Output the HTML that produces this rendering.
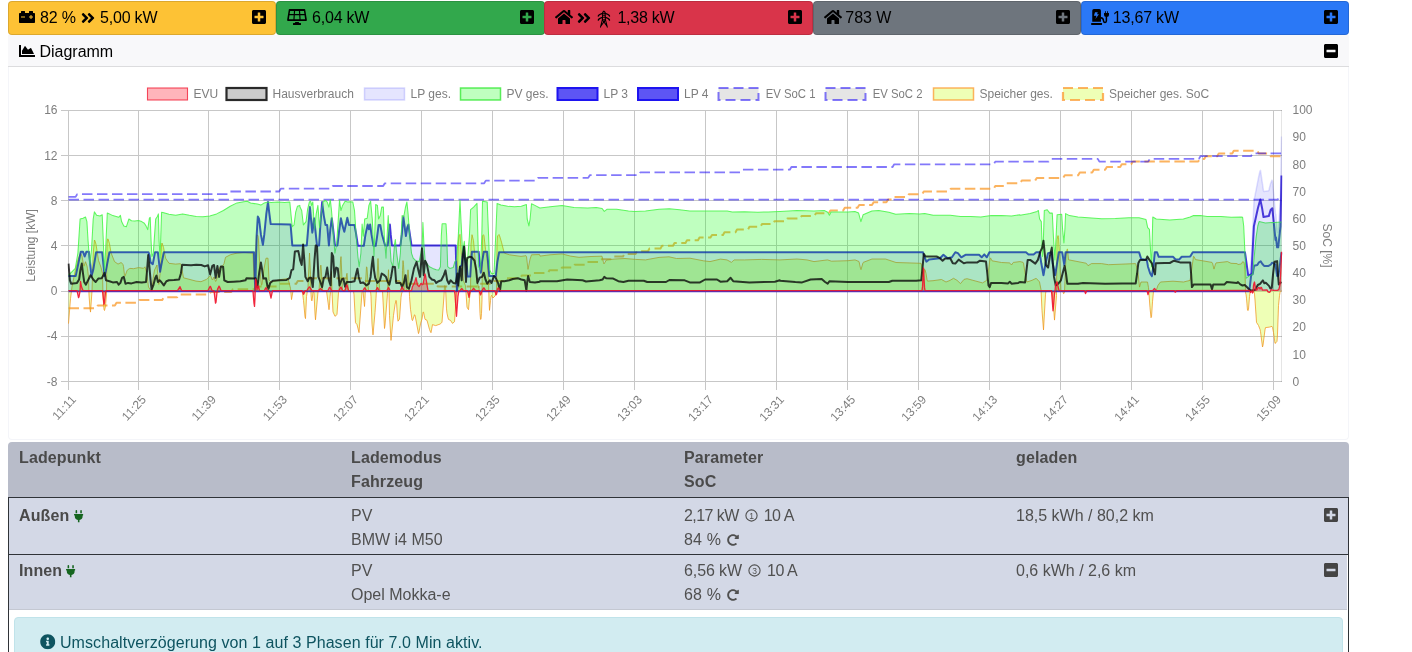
<!DOCTYPE html>
<html lang="de"><head><meta charset="utf-8"><title>openWB</title>
<style>
*{box-sizing:border-box}
html,body{margin:0;padding:0;background:#fff}
body{width:1412px;height:652px;overflow:hidden;position:relative;font-family:"Liberation Sans",Arial,sans-serif;font-size:16px;color:#000}
.abs{position:absolute}
.card{position:absolute;top:1px;height:34px;border-radius:4px;border:1px solid rgba(0,0,0,.13)}
.card .t{position:absolute;top:5.8px;font-size:16px;line-height:20px;white-space:nowrap;color:#000}
.sq{position:absolute;width:14px;height:14px;background:#000;border-radius:2px}
.sq i{position:absolute;display:block}
.sq .h{left:3px;top:6px;width:8px;height:2px}
.sq .v{left:6px;top:3px;width:2px;height:8px}
svg{position:absolute;overflow:visible}
.th{font-weight:bold;color:#4a4a4a;letter-spacing:.12px}
.td{color:#505050}
.tx{position:absolute;white-space:nowrap;line-height:20px;font-size:16px}
</style></head><body><div id="root" style="position:absolute;left:0;top:0;width:1412px;height:652px;overflow:hidden;will-change:transform">

<svg width="0" height="0" style="position:absolute"><defs>
<symbol id="i-plus" viewBox="0 0 448 512"><path d="M400 32H48C21.5 32 0 53.5 0 80v352c0 26.5 21.5 48 48 48h352c26.5 0 48-21.5 48-48V80c0-26.5-21.5-48-48-48zm-32 252c0 6.600-5.400 12-12 12h-92v92c0 6.600-5.400 12-12 12h-56c-6.600 0-12-5.400-12-12v-92H92c-6.600 0-12-5.400-12-12v-56c0-6.600 5.400-12 12-12h92v-92c0-6.600 5.400-12 12-12h56c6.600 0 12 5.400 12 12v92h92c6.600 0 12 5.400 12 12v56z"/></symbol>
<symbol id="i-minus" viewBox="0 0 448 512"><path d="M400 32H48C21.5 32 0 53.5 0 80v352c0 26.5 21.5 48 48 48h352c26.5 0 48-21.5 48-48V80c0-26.5-21.5-48-48-48zM92 296c-6.600 0-12-5.400-12-12v-56c0-6.600 5.400-12 12-12h264c6.600 0 12 5.400 12 12v56c0 6.600-5.400 12-12 12H92z"/></symbol>
<symbol id="i-bat" viewBox="0 0 512 512"><path d="M480 128h-32V80c0-8.840-7.160-16-16-16h-96c-8.840 0-16 7.160-16 16v48H192V80c0-8.840-7.160-16-16-16H80c-8.840 0-16 7.160-16 16v48H32c-17.670 0-32 14.330-32 32v256c0 17.670 14.330 32 32 32h448c17.670 0 32-14.330 32-32V160c0-17.670-14.330-32-32-32zM192 264c0 4.420-3.580 8-8 8H72c-4.420 0-8-3.580-8-8v-16c0-4.420 3.580-8 8-8h112c4.420 0 8 3.580 8 8v16zm256 0c0 4.420-3.580 8-8 8h-40v40c0 4.420-3.580 8-8 8h-16c-4.420 0-8-3.580-8-8v-40h-40c-4.420 0-8-3.580-8-8v-16c0-4.420 3.580-8 8-8h40v-40c0-4.420 3.580-8 8-8h16c4.420 0 8 3.580 8 8v40h40c4.420 0 8 3.580 8 8v16z"/></symbol>
<symbol id="i-home" viewBox="0 0 576 512"><path d="M280.370 148.260L96 300.110V464a16 16 0 0 0 16 16l112.060-.290a16 16 0 0 0 15.920-16V368a16 16 0 0 1 16-16h64a16 16 0 0 1 16 16v95.640a16 16 0 0 0 16 16.050L464 480a16 16 0 0 0 16-16V300L295.670 148.260a12.190 12.190 0 0 0-15.300 0zM571.600 251.470L488 182.560V44.050a12 12 0 0 0-12-12h-56a12 12 0 0 0-12 12v72.610L318.470 43a48 48 0 0 0-61 0L4.340 251.470a12 12 0 0 0-1.600 16.900l25.500 31A12 12 0 0 0 45.150 301l235.220-193.740a12.190 12.190 0 0 1 15.300 0L530.900 301a12 12 0 0 0 16.900-1.600l25.500-31a12 12 0 0 0-1.700-16.930z"/></symbol>
<symbol id="i-dbl" viewBox="0 0 448 512"><path d="M224.300 273l-136 136c-9.400 9.400-24.600 9.400-33.900 0l-22.600-22.600c-9.400-9.400-9.400-24.600 0-33.900l96.400-96.400-96.400-96.400c-9.400-9.400-9.400-24.600 0-33.900L54.300 103c9.400-9.400 24.600-9.400 33.900 0l136 136c9.500 9.400 9.500 24.600.1 34zm192-34l-136-136c-9.400-9.400-24.600-9.400-33.900 0l-22.600 22.600c-9.400 9.400-9.400 24.600 0 33.900l96.400 96.400-96.400 96.400c-9.400 9.400-9.400 24.600 0 33.900l22.600 22.600c9.400 9.400 24.600 9.400 33.900 0l136-136c9.400-9.200 9.400-24.400 0-33.800z"/></symbol>
<symbol id="i-area" viewBox="0 0 512 512"><path d="M500 384c6.600 0 12 5.400 12 12v40c0 6.600-5.400 12-12 12H12c-6.600 0-12-5.400-12-12V76c0-6.600 5.400-12 12-12h40c6.600 0 12 5.400 12 12v308h436zM372.700 159.500L288 216l-85.300-113.700c-5.100-6.800-15.500-6.300-19.900 1L96 248v104h384l-89.900-187.800c-3.200-6.500-11.400-8.700-17.400-4.700z"/></symbol>
<symbol id="i-plug" viewBox="0 0 384 512"><path d="M320 32a32 32 0 0 0-64 0v96h64zm48 128H16A16 16 0 0 0 0 176v32a16 16 0 0 0 16 16h16v32a160.070 160.070 0 0 0 128 156.800V512h64v-99.200A160.070 160.070 0 0 0 352 256v-32h16a16 16 0 0 0 16-16v-32a16 16 0 0 0-16-16zM128 32a32 32 0 0 0-64 0v96h64z"/></symbol>
<symbol id="i-info" viewBox="0 0 512 512"><path d="M256 8C119.043 8 8 119.083 8 256c0 136.997 111.043 248 248 248s248-111.003 248-248C504 119.083 392.957 8 256 8zm0 110c23.196 0 42 18.804 42 42s-18.804 42-42 42-42-18.804-42-42 18.804-42 42-42zm56 254c0 6.627-5.373 12-12 12h-88c-6.627 0-12-5.373-12-12v-24c0-6.627 5.373-12 12-12h12v-64h-12c-6.627 0-12-5.373-12-12v-24c0-6.627 5.373-12 12-12h64c6.627 0 12 5.373 12 12v100h12c6.627 0 12 5.373 12 12v24z"/></symbol>
<symbol id="i-redo" viewBox="0 0 512 512"><path d="M256.455 8c66.269.119 126.437 26.233 170.859 68.685l35.715-35.715C478.149 25.851 504 36.559 504 57.941V192c0 13.255-10.745 24-24 24H345.941c-21.382 0-32.090-25.851-16.971-40.971l41.750-41.750c-30.864-28.899-70.801-44.907-113.230-45.273-92.398-.798-170.283 73.977-169.484 169.442C88.764 348.009 162.184 424 256 424c41.127 0 79.997-14.678 110.629-41.556 4.743-4.161 11.906-3.908 16.368.553l39.662 39.662c4.872 4.872 4.631 12.815-.482 17.433C378.202 479.813 319.926 504 256 504 119.034 504 8.001 392.967 8 256.002 7.999 119.193 119.646 7.755 256.455 8z"/></symbol>
</defs></svg>
<!-- top cards -->
<div class="card" style="left:8px;width:268.4px;background:#fdc235">
<svg style="left:10px;top:7px" width="16" height="16"><use href="#i-bat"/></svg>
<span class="t" style="left:31px;letter-spacing:-.2px">82 %</span>
<svg style="left:72.3px;top:7.5px" width="14" height="16"><use href="#i-dbl"/></svg>
<span class="t" style="left:91px;letter-spacing:-.2px">5,00 kW</span>
<svg style="left:242.7px;top:6.5px" width="14" height="16" fill="#000"><use href="#i-plus"/></svg></div>
<div class="card" style="left:276.2px;width:268.4px;background:#32a84c">
<svg style="left:9.8px;top:7px" width="20" height="17" viewBox="0 0 20 17"><path fill-rule="evenodd" d="M2.500 0h15a.7.7 0 0 1 .7.6l1.700 10.500a.7.7 0 0 1-.7.800H.8a.7.700 0 0 1-.7-.8L1.800.6a.7.700 0 0 1 .7-.6zM3.100 2.100l-.45 3h4.100l.2-3zM8.100 2.100l-.2 3h4.200l-.2-3zM13.100 2.100l.2 3h4.100l-.45-3zM2.450 6.300l-.55 3.900h4.500l.25-3.900zM7.800 6.300l-.25 3.900h4.900l-.25-3.900zM13.350 6.300l.25 3.900h4.500l-.55-3.900zM8.400 13h3.200l.6 1h1.300a.5.500 0 0 1 .5.500v.9a.5.500 0 0 1-.5.500h-7a.5.500 0 0 1-.5-.5v-.9a.5.500 0 0 1 .5-.5h1.300z"/></svg>
<span class="t" style="left:34.8px;letter-spacing:-.2px">6,04 kW</span>
<svg style="left:242.7px;top:6.5px" width="14" height="16"><use href="#i-plus"/></svg></div>
<div class="card" style="left:544.4px;width:268.4px;background:#d9344a">
<svg style="left:10px;top:7px" width="18" height="16"><use href="#i-home"/></svg>
<svg style="left:31.3px;top:7.5px" width="14" height="16"><use href="#i-dbl"/></svg>
<svg style="left:51.600px;top:8px" width="14" height="18" viewBox="0 0 14 18" fill="none" stroke="#000" stroke-linecap="round" stroke-linejoin="round"><path stroke-width="1.050" d="M6.900 1.100L5.800 2.200 5.400 9.700 3.500 17.100M6.900 1.100L8 2.200 8.400 9.700 10.300 17.100M5.400 9.700L10 16.300M8.400 9.700L3.800 16.300"/><path stroke-width="1.350" d="M1.300 6Q1.600 4.400 5.600 3.300M12.500 6Q12.200 4.400 8.200 3.300M1.300 10.100Q1.600 8.400 5.400 7.300M12.500 10.100Q12.200 8.400 8.400 7.300"/><path stroke-width=".85" d="M5.800 3.300H8M5.600 5.300H8.200M5.500 7.300H8.300M5.400 9.700H8.400"/></svg>
<span class="t" style="left:72px;letter-spacing:-.25px">1,38 kW</span>
<svg style="left:242.7px;top:6.5px" width="14" height="16"><use href="#i-plus"/></svg></div>
<div class="card" style="left:812.6px;width:268.4px;background:#6e757d">
<svg style="left:10px;top:7px" width="18" height="16"><use href="#i-home"/></svg>
<span class="t" style="left:31.7px;letter-spacing:-.05px">783 W</span>
<svg style="left:242.7px;top:6.5px" width="14" height="16"><use href="#i-plus"/></svg></div>
<div class="card" style="left:1080.8px;width:268.2px;background:#2a78f6">
<svg style="left:9.200px;top:7px" width="19" height="17" viewBox="0 0 19 17"><path fill-rule="evenodd" d="M2.900 0h5.400a1.650 1.650 0 0 1 1.650 1.650V12.700H1.250V1.650A1.650 1.650 0 0 1 2.900 0zM4 3.350h2.800l-.8 1.850h1.900L4.400 10l1.100-3.150H2.900zM.5 14h10.200a.35.350 0 0 1 .35.350v1.200a.35.350 0 0 1-.35.350H.5a.35.350 0 0 1-.35-.35v-1.200A.35.350 0 0 1 .5 14zM13.950 2.400a.45.450 0 0 1 .9 0v1.500h1.300v-1.500a.45.450 0 0 1 .9 0v1.500h.65a.3.300 0 0 1 .3.300v1.300a2.500 2.500 0 0 1-5 0v-1.300a.3.300 0 0 1 .3-.3h.65z"/><path d="M9.900 8.700c2.400.2 2.500 1.600 2.700 3.400s2.800 1.800 2.800-.3V7.500" fill="none" stroke="#000" stroke-width="1.500"/></svg>
<span class="t" style="left:31px;letter-spacing:-.2px">13,67 kW</span>
<svg style="left:242.7px;top:6.5px" width="14" height="16"><use href="#i-plus"/></svg></div>

<!-- chart card -->
<div class="abs" id="chartcard" style="left:8px;top:35px;width:1341px;height:405px;border:1px solid #f4f5f9;border-top:none;border-radius:0 0 4px 4px;background:#fff"></div>
<div class="abs" style="left:8px;top:35px;width:1341px;height:32px;background:#f8f8fa;border-bottom:1px solid #dcdcde"></div>
<svg style="left:18.500px;top:43.200px" width="16" height="16"><use href="#i-area"/></svg>
<span class="tx" style="left:39.400px;top:42px">Diagramm</span>
<svg style="left:1324px;top:43px" width="14" height="16"><use href="#i-minus"/></svg>

<!-- CHART -->
<!--CS-->
<svg id="chart" width="1412" height="652" viewBox="0 0 1412 652" style="left:0;top:0" font-family="Liberation Sans, Arial, sans-serif" font-size="12" fill="#7e7e7e">
<path d="M68.5 110 V390 M138.5 110 V390 M208.4 110 V390 M279.5 110 V390 M350.5 110 V390 M421.4 110 V390 M492.3 110 V390 M563.3 110 V390 M634.4 110 V390 M705.5 110 V390 M776.6 110 V390 M847.7 110 V390 M918.7 110 V390 M989.7 110 V390 M1060.5 110 V390 M1131.6 110 V390 M1202.5 110 V390 M1273.6 110 V390 M60.5 110 H1281.5 M60.5 155.3 H1281.5 M60.5 200.5 H1281.5 M60.5 245.7 H1281.5 M60.5 291 H1281.5 M60.5 336.2 H1281.5 M60.5 381.5 H1281.5" stroke="#000" stroke-opacity=".22" stroke-width="1" fill="none" shape-rendering="crispEdges"/>
<path d="M1281.5 110 V381.5" stroke="#000" stroke-opacity=".1" stroke-width="1" fill="none" shape-rendering="crispEdges"/>
<clipPath id="cp"><rect x="67.5" y="110" width="1215" height="271.5"/></clipPath>
<g clip-path="url(#cp)" fill="none" stroke-linejoin="round" stroke-linecap="butt">
<path d="M68.5 308.2 L96.2 308.2 L97.8 305.5 L114.9 305.5 L116.5 302.8 L137.8 302.8 L139.4 300.1 L162.2 300.1 L163.8 297.3 L177.2 297.3 L178.8 294.6 L209.2 294.6 L210.8 291.9 L231.2 291.9 L232.8 289.2 L254.2 289.2 L255.8 286.5 L277.2 286.5 L278.8 283.8 L296.2 283.8 L297.8 281 L306.2 281 L307.8 278.3 L364.2 278.3 L365.8 281 L399.2 281 L400.8 283.8 L436.2 283.8 L437.8 286.5 L477.2 286.5 L478.8 283.8 L491.2 283.8 L492.8 281 L504.2 281 L505.8 278.3 L520.2 278.3 L521.8 275.6 L532.2 275.6 L533.8 272.9 L548 272.9 L549.5 270.2 L560.5 270.2 L562 267.5 L573 267.5 L574.5 264.8 L585.5 264.8 L587 262 L598 262 L599.5 259.3 L610.5 259.3 L612 256.6 L623 256.6 L624.5 253.9 L635.5 253.9 L637 251.2 L648 251.2 L649.5 248.5 L660.5 248.5 L662 245.8 L673 245.8 L674.5 243 L685.5 243 L687 240.3 L698 240.3 L699.5 237.6 L710.5 237.6 L712 234.9 L723 234.9 L724.5 232.2 L735.5 232.2 L737 229.5 L748 229.5 L749.5 226.7 L760.5 226.7 L762 224 L773 224 L774.5 221.3 L785.6 221.3 L787.2 218.6 L800 218.6 L801.6 215.9 L814.4 215.9 L816 213.2 L828.8 213.2 L830.4 210.5 L843.2 210.5 L844.8 207.7 L857.6 207.7 L859.2 205 L872 205 L873.6 202.3 L886.4 202.3 L888 199.6 L892.6 199.6 L894.2 196.9 L907.2 196.9 L908.8 194.2 L922.2 194.2 L923.8 191.5 L949.2 191.5 L950.8 188.7 L993.7 188.7 L995.3 186 L1004.2 186 L1005.8 183.3 L1020.2 183.3 L1021.8 180.6 L1035.2 180.6 L1036.8 177.9 L1063.2 177.9 L1064.8 175.2 L1078.2 175.2 L1079.8 172.4 L1092.2 172.4 L1093.8 169.7 L1105.2 169.7 L1106.8 167 L1120.2 167 L1121.8 164.3 L1131.2 164.3 L1132.8 161.6 L1198.2 161.6 L1199.8 158.9 L1204.2 158.9 L1205.8 156.2 L1217.2 156.2 L1218.8 153.4 L1232.2 153.4 L1233.8 150.7 L1257.2 150.7 L1258.8 153.4 L1269.2 153.4 L1270.8 156.2 L1281.5 156.2" stroke="#f99a2a" stroke-opacity=".75" stroke-width="2" stroke-dasharray="10.5 4.5"/>
<path d="M68.5 323.6 L70.5 298.7 L72 286.7 L75.5 269.4 L77.5 261.4 L78 259.6 L80.5 253.2 L82 256.2 L83.5 264.7 L84 266.2 L85.5 261.7 L87 266 L87.5 268.8 L88.5 276.8 L89 295 L90 308.8 L90.5 312.1 L92 291 L93 259.2 L93.5 250 L94.5 240 L95 241 L96 244.3 L98.5 260.4 L101 267.3 L102.5 273.3 L103 297 L104 309.5 L104.5 310.5 L105.5 306.3 L106.5 294 L107 243.7 L107.5 239.2 L108 238.8 L109.5 243.7 L111 252.7 L114.5 261.6 L118 264.1 L121 262.6 L121.5 262.7 L123 264.6 L123.5 266.6 L124.5 275.3 L125 276.1 L127 270.7 L127.5 269.9 L129.5 268.6 L130 268.4 L133.5 268.7 L138.5 267.6 L143.5 268.3 L145 266.8 L146.5 272.3 L147 275 L148.5 287 L151 290.9 L151.5 291 L152 290 L153 278.9 L154.5 270 L157 265 L158.5 284.2 L159 284.4 L160.5 268.4 L161.5 244.8 L162 243 L163.5 247.3 L165.5 258 L166 258.9 L169 263.3 L175.5 264.1 L180.5 263.7 L181 264.3 L183.5 277.8 L196 281.1 L201 281.7 L206.5 279.4 L210.5 275.4 L212 279.3 L212.5 280 L214 277 L215.5 281.3 L216 281.3 L217.5 276.7 L220 266.7 L222.5 265.9 L224 263.7 L225.5 257.3 L230.5 254.7 L237 253.1 L244 252.4 L253 253.1 L254 279 L255.5 257 L256.5 236.5 L257 234.8 L258 235.8 L258.5 240.1 L260 270.1 L261.5 285.1 L262 284.7 L264 268.7 L266 258.2 L268 258.2 L269 279.9 L269.5 280.7 L271 282 L271.5 281.9 L281 279.5 L288 278.6 L290.5 288.2 L291.5 299.6 L293 291 L302 291 L302.5 292.9 L303.5 300.4 L305 316.8 L305.5 318.6 L306.5 296.6 L308 287.2 L309.5 253 L310.5 274.3 L311 294.3 L311.5 300.3 L312 300.9 L313 292.4 L313.5 291.4 L314 293.2 L315 313.9 L315.5 319.8 L318 291.9 L318.5 291 L319 291 L320.5 265.6 L321 265.1 L322.5 291 L326.5 291 L329 309.7 L329.5 305.3 L330 296.8 L330.5 292.4 L331 291.8 L331.5 271.4 L332 291.9 L333 311.9 L335 316.3 L335.5 316.1 L337 314.3 L338.5 292.4 L339 291.4 L340.5 261 L341 256.6 L342.5 289.9 L343 291 L345 291 L345.5 288.1 L346.5 274.9 L347 273.3 L348.5 291 L353.5 291 L354 294.7 L355.5 322.7 L357 324.6 L359 332.6 L362 292.5 L363 291 L364.5 306.5 L365 298.5 L365.5 283.2 L366.5 266.8 L367 267.7 L368.5 291 L370.5 291 L371 296.5 L372 324.1 L373 334.9 L375 312.5 L376 298.4 L378 258.5 L379.5 287.9 L380 291 L382.5 291 L384.5 328.5 L385 325.2 L387.5 293.6 L388 277.6 L388.5 269.7 L389.5 315.4 L391 340.4 L393.5 315.3 L395 304.7 L396 300.4 L396.5 302.1 L397.5 317.1 L398 321.2 L399.5 319.1 L401 297.5 L401.5 294 L402 292.5 L402.5 270.4 L403 260.6 L403.5 264.6 L405 291 L406.5 291 L408 269.8 L409 282 L409.5 296.5 L410.5 309.3 L412 319.8 L412.5 320.6 L414.5 314.8 L415 315.1 L418.5 333.6 L419 332 L420.5 323.8 L422 319 L423 312.6 L423.5 311.9 L425 319.3 L427 320.3 L429.5 329.5 L430.5 332 L431 332.7 L432.5 324.6 L435.5 325.6 L436 325.5 L440 324.1 L441.5 322.9 L442 322.1 L444 295.9 L444.5 285.8 L445.5 286.1 L446.5 308.9 L447 313.4 L448 317.8 L448.5 319.4 L450.5 320.4 L452.5 323.4 L454.5 321.7 L456.5 294.1 L457 274.6 L457.5 268.6 L458.5 240 L459 235.6 L460 234.4 L462 263.5 L463.5 280.6 L465.5 285.9 L467 307 L467.5 308.3 L468.5 309.7 L469.5 298.1 L470.5 291.6 L471 244.4 L472 234.7 L473.5 240.7 L477 280.1 L478.5 287.7 L479 286.3 L480 313.5 L480.5 319.3 L481 319.3 L481.5 313.3 L482 299.8 L482.5 235.7 L483.5 234.7 L484 235.9 L485.5 249.4 L487 258.5 L487.5 264.1 L488.5 280.1 L489 300.1 L489.5 310.4 L490.5 300.6 L491 296.9 L491.5 295.3 L493 298 L495 296 L496.5 292.4 L497 245 L497.5 236 L499 234.5 L499.5 235.5 L501.5 242.2 L504 252.1 L504.5 253.2 L509.5 254.8 L521 256.4 L526 255.7 L526.5 256.6 L528 269.4 L530 259.3 L531.5 254.8 L539.5 254.5 L540 256.1 L550 254.8 L562 253.9 L570.5 256.1 L579 257.3 L591 256.5 L602 256.2 L603.5 262.6 L604 263.9 L606.5 259.9 L615 259 L625 258.5 L635.5 259.4 L645.5 259.9 L659 257.4 L669 256.8 L676.5 258.5 L690 258.2 L703.5 260.8 L710 261.6 L720.5 259.1 L727 259.9 L731.5 262.4 L734 259.9 L734.5 259.9 L744.5 259.9 L761.5 259.4 L780 259.9 L797 259 L807 259.9 L814 261.6 L827.5 259.9 L831.5 261.2 L848 260.7 L855 259.9 L859 261.5 L860.5 268.4 L861 269.6 L863 262.7 L863.5 262.3 L872 259 L885.5 259 L896 262.5 L921 263.3 L921.5 265.1 L923 276.8 L924.5 269.3 L925 269.6 L926 273.4 L927 279.7 L927.5 281.1 L933 280.7 L941.5 279.5 L946 282 L950 280.4 L953.5 278.3 L957 280.3 L960.5 283.6 L964 279.4 L967 278.7 L982.5 282.9 L986.5 280.5 L987 279.2 L988.5 270.2 L990 258.9 L990.5 257.9 L992 260.8 L1001.5 262.5 L1009.5 262.9 L1010 263.2 L1011.5 265 L1013 262.7 L1013.5 262.4 L1020 261.6 L1023 262.3 L1023.5 263.1 L1025 272.8 L1026.5 280.5 L1027 282 L1032 280.3 L1036 278.4 L1036.5 278.6 L1039.5 281.9 L1041 289.6 L1042 310.6 L1043.5 329.9 L1045.5 294.2 L1046 291 L1052 291 L1053 300.1 L1054.5 320.1 L1056.5 295.7 L1057 239.6 L1058 235.6 L1058.5 237.5 L1059.5 253.4 L1061 291 L1062.5 291 L1063 291.8 L1063.5 293.6 L1064 293.5 L1064.5 291.7 L1066 256.2 L1067 249.3 L1067.5 249.1 L1068.5 259.8 L1086 263.2 L1086.5 263.5 L1088 265.7 L1091.5 263.6 L1101.5 263.6 L1108.5 264.7 L1135.5 263.6 L1136 264.6 L1138 272.4 L1139.5 287.1 L1141 282 L1147.5 282 L1148.5 287.6 L1150 307.7 L1151 317.7 L1151.5 316.8 L1152.5 301.8 L1153.5 291 L1156 291 L1158 285.3 L1160.5 282 L1173 281.2 L1183.5 282 L1190 280.4 L1190.5 278 L1193.5 256.4 L1194 256.5 L1195.5 259.6 L1212 262.4 L1212.5 263.1 L1214 269.1 L1215.5 263.9 L1216 262.9 L1227.5 261.6 L1231 263.3 L1237 263.6 L1238 264.5 L1241 264 L1241.5 263.8 L1242.5 261.8 L1244 262.2 L1244.5 265.3 L1245 271 L1245.5 292.7 L1246 294.3 L1246.5 298.2 L1247.5 310.1 L1248 310.6 L1248.5 309.1 L1249.5 296.5 L1250 292.8 L1251.5 290.9 L1253.5 290.9 L1254 291.9 L1254.5 294.1 L1255 299.9 L1256.5 322.4 L1258.5 325.5 L1260 329.3 L1260.5 331.6 L1262.5 347 L1263 345.2 L1265 329.8 L1265.5 327.6 L1269.5 327.1 L1272 326.4 L1272.5 327.3 L1273.5 332.5 L1275 343.4 L1276 342.7 L1277 341.3 L1277.5 334.1 L1278.5 305.6 L1279.5 295.6 L1280 292.6 L1280.5 291.4 L1281 290.9 L1281.5 290.9 L1281.5 291 L68.5 291 Z" fill="#c8ff0d" fill-opacity=".3" stroke="none"/>
<path d="M68.5 323.6 L70.5 298.7 L72 286.7 L75.5 269.4 L77.5 261.4 L78 259.6 L80.5 253.2 L82 256.2 L83.5 264.7 L84 266.2 L85.5 261.7 L87 266 L87.5 268.8 L88.5 276.8 L89 295 L90 308.8 L90.5 312.1 L92 291 L93 259.2 L93.5 250 L94.5 240 L95 241 L96 244.3 L98.5 260.4 L101 267.3 L102.5 273.3 L103 297 L104 309.5 L104.5 310.5 L105.5 306.3 L106.5 294 L107 243.7 L107.5 239.2 L108 238.8 L109.5 243.7 L111 252.7 L114.5 261.6 L118 264.1 L121 262.6 L121.5 262.7 L123 264.6 L123.5 266.6 L124.5 275.3 L125 276.1 L127 270.7 L127.5 269.9 L129.5 268.6 L130 268.4 L133.5 268.7 L138.5 267.6 L143.5 268.3 L145 266.8 L146.5 272.3 L147 275 L148.5 287 L151 290.9 L151.5 291 L152 290 L153 278.9 L154.5 270 L157 265 L158.5 284.2 L159 284.4 L160.5 268.4 L161.5 244.8 L162 243 L163.5 247.3 L165.5 258 L166 258.9 L169 263.3 L175.5 264.1 L180.5 263.7 L181 264.3 L183.5 277.8 L196 281.1 L201 281.7 L206.5 279.4 L210.5 275.4 L212 279.3 L212.5 280 L214 277 L215.5 281.3 L216 281.3 L217.5 276.7 L220 266.7 L222.5 265.9 L224 263.7 L225.5 257.3 L230.5 254.7 L237 253.1 L244 252.4 L253 253.1 L254 279 L255.5 257 L256.5 236.5 L257 234.8 L258 235.8 L258.5 240.1 L260 270.1 L261.5 285.1 L262 284.7 L264 268.7 L266 258.2 L268 258.2 L269 279.9 L269.5 280.7 L271 282 L271.5 281.9 L281 279.5 L288 278.6 L290.5 288.2 L291.5 299.6 L293 291 L302 291 L302.5 292.9 L303.5 300.4 L305 316.8 L305.5 318.6 L306.5 296.6 L308 287.2 L309.5 253 L310.5 274.3 L311 294.3 L311.5 300.3 L312 300.9 L313 292.4 L313.5 291.4 L314 293.2 L315 313.9 L315.5 319.8 L318 291.9 L318.5 291 L319 291 L320.5 265.6 L321 265.1 L322.5 291 L326.5 291 L329 309.7 L329.5 305.3 L330 296.8 L330.5 292.4 L331 291.8 L331.5 271.4 L332 291.9 L333 311.9 L335 316.3 L335.5 316.1 L337 314.3 L338.5 292.4 L339 291.4 L340.5 261 L341 256.6 L342.5 289.9 L343 291 L345 291 L345.5 288.1 L346.5 274.9 L347 273.3 L348.5 291 L353.5 291 L354 294.7 L355.5 322.7 L357 324.6 L359 332.6 L362 292.5 L363 291 L364.5 306.5 L365 298.5 L365.5 283.2 L366.5 266.8 L367 267.7 L368.5 291 L370.5 291 L371 296.5 L372 324.1 L373 334.9 L375 312.5 L376 298.4 L378 258.5 L379.5 287.9 L380 291 L382.5 291 L384.5 328.5 L385 325.2 L387.5 293.6 L388 277.6 L388.5 269.7 L389.5 315.4 L391 340.4 L393.5 315.3 L395 304.7 L396 300.4 L396.5 302.1 L397.5 317.1 L398 321.2 L399.5 319.1 L401 297.5 L401.5 294 L402 292.5 L402.5 270.4 L403 260.6 L403.5 264.6 L405 291 L406.5 291 L408 269.8 L409 282 L409.5 296.5 L410.5 309.3 L412 319.8 L412.5 320.6 L414.5 314.8 L415 315.1 L418.5 333.6 L419 332 L420.5 323.8 L422 319 L423 312.6 L423.5 311.9 L425 319.3 L427 320.3 L429.5 329.5 L430.5 332 L431 332.7 L432.5 324.6 L435.5 325.6 L436 325.5 L440 324.1 L441.5 322.9 L442 322.1 L444 295.9 L444.5 285.8 L445.5 286.1 L446.5 308.9 L447 313.4 L448 317.8 L448.5 319.4 L450.5 320.4 L452.5 323.4 L454.5 321.7 L456.5 294.1 L457 274.6 L457.5 268.6 L458.5 240 L459 235.6 L460 234.4 L462 263.5 L463.5 280.6 L465.5 285.9 L467 307 L467.5 308.3 L468.5 309.7 L469.5 298.1 L470.5 291.6 L471 244.4 L472 234.7 L473.5 240.7 L477 280.1 L478.5 287.7 L479 286.3 L480 313.5 L480.5 319.3 L481 319.3 L481.5 313.3 L482 299.8 L482.5 235.7 L483.5 234.7 L484 235.9 L485.5 249.4 L487 258.5 L487.5 264.1 L488.5 280.1 L489 300.1 L489.5 310.4 L490.5 300.6 L491 296.9 L491.5 295.3 L493 298 L495 296 L496.5 292.4 L497 245 L497.5 236 L499 234.5 L499.5 235.5 L501.5 242.2 L504 252.1 L504.5 253.2 L509.5 254.8 L521 256.4 L526 255.7 L526.5 256.6 L528 269.4 L530 259.3 L531.5 254.8 L539.5 254.5 L540 256.1 L550 254.8 L562 253.9 L570.5 256.1 L579 257.3 L591 256.5 L602 256.2 L603.5 262.6 L604 263.9 L606.5 259.9 L615 259 L625 258.5 L635.5 259.4 L645.5 259.9 L659 257.4 L669 256.8 L676.5 258.5 L690 258.2 L703.5 260.8 L710 261.6 L720.5 259.1 L727 259.9 L731.5 262.4 L734 259.9 L734.5 259.9 L744.5 259.9 L761.5 259.4 L780 259.9 L797 259 L807 259.9 L814 261.6 L827.5 259.9 L831.5 261.2 L848 260.7 L855 259.9 L859 261.5 L860.5 268.4 L861 269.6 L863 262.7 L863.5 262.3 L872 259 L885.5 259 L896 262.5 L921 263.3 L921.5 265.1 L923 276.8 L924.5 269.3 L925 269.6 L926 273.4 L927 279.7 L927.5 281.1 L933 280.7 L941.5 279.5 L946 282 L950 280.4 L953.5 278.3 L957 280.3 L960.5 283.6 L964 279.4 L967 278.7 L982.5 282.9 L986.5 280.5 L987 279.2 L988.5 270.2 L990 258.9 L990.5 257.9 L992 260.8 L1001.5 262.5 L1009.5 262.9 L1010 263.2 L1011.5 265 L1013 262.7 L1013.5 262.4 L1020 261.6 L1023 262.3 L1023.5 263.1 L1025 272.8 L1026.5 280.5 L1027 282 L1032 280.3 L1036 278.4 L1036.5 278.6 L1039.5 281.9 L1041 289.6 L1042 310.6 L1043.5 329.9 L1045.5 294.2 L1046 291 L1052 291 L1053 300.1 L1054.5 320.1 L1056.5 295.7 L1057 239.6 L1058 235.6 L1058.5 237.5 L1059.5 253.4 L1061 291 L1062.5 291 L1063 291.8 L1063.5 293.6 L1064 293.5 L1064.5 291.7 L1066 256.2 L1067 249.3 L1067.5 249.1 L1068.5 259.8 L1086 263.2 L1086.5 263.5 L1088 265.7 L1091.5 263.6 L1101.5 263.6 L1108.5 264.7 L1135.5 263.6 L1136 264.6 L1138 272.4 L1139.5 287.1 L1141 282 L1147.5 282 L1148.5 287.6 L1150 307.7 L1151 317.7 L1151.5 316.8 L1152.5 301.8 L1153.5 291 L1156 291 L1158 285.3 L1160.5 282 L1173 281.2 L1183.5 282 L1190 280.4 L1190.5 278 L1193.5 256.4 L1194 256.5 L1195.5 259.6 L1212 262.4 L1212.5 263.1 L1214 269.1 L1215.5 263.9 L1216 262.9 L1227.5 261.6 L1231 263.3 L1237 263.6 L1238 264.5 L1241 264 L1241.5 263.8 L1242.5 261.8 L1244 262.2 L1244.5 265.3 L1245 271 L1245.5 292.7 L1246 294.3 L1246.5 298.2 L1247.5 310.1 L1248 310.6 L1248.5 309.1 L1249.5 296.5 L1250 292.8 L1251.5 290.9 L1253.5 290.9 L1254 291.9 L1254.5 294.1 L1255 299.9 L1256.5 322.4 L1258.5 325.5 L1260 329.3 L1260.5 331.6 L1262.5 347 L1263 345.2 L1265 329.8 L1265.5 327.6 L1269.5 327.1 L1272 326.4 L1272.5 327.3 L1273.5 332.5 L1275 343.4 L1276 342.7 L1277 341.3 L1277.5 334.1 L1278.5 305.6 L1279.5 295.6 L1280 292.6 L1280.5 291.4 L1281 290.9 L1281.5 290.9" stroke="#f0961e" stroke-opacity=".75" stroke-width="1"/>
<path d="M68.5 199.6 L1277.7 199.6 L1279.3 196.9 L1281.5 196.9" stroke="#1400f5" stroke-opacity=".53" stroke-width="1.8" stroke-dasharray="10.5 4.5"/>
<path d="M68.5 196.9 L75.6 196.9 L77.2 194.2 L228.7 194.2 L230.3 191.5 L279.2 191.5 L280.8 188.7 L331.2 188.7 L332.8 186 L383.2 186 L384.8 183.3 L484.2 183.3 L485.8 180.6 L536.2 180.6 L537.8 177.9 L588.2 177.9 L589.8 175.2 L638.7 175.2 L640.3 172.4 L741.2 172.4 L742.8 169.7 L789.8 169.7 L791.4 167 L892.6 167 L894.2 164.3 L993.7 164.3 L995.3 161.6 L1048.7 161.6 L1050.3 158.9 L1097.8 158.9 L1099.4 161.6 L1148.2 161.6 L1149.8 158.9 L1198.9 158.9 L1200.5 156.2 L1251 156.2 L1252.6 153.4 L1281.5 153.4" stroke="#1400f5" stroke-opacity=".53" stroke-width="1.8" stroke-dasharray="10.5 4.5"/>
<path d="M68.5 291 L1249.3 290.9 L1251.6 271.4 L1253.9 226 L1257.9 207.9 L1260.3 199.1 L1262.1 207.9 L1263.5 216.7 L1268.8 215.8 L1270.6 209.7 L1272.3 207.9 L1275.5 239.6 L1276 237.3 L1277.1 247 L1278.2 247 L1280.5 226 L1281.5 175.3" stroke="#1700ca" stroke-opacity=".75" stroke-width="2" transform="translate(0 .3)"/>
<path d="M68.5 276.1 L75.7 276.1 L80.8 251.7 L83 251.7 L84.7 256.5 L86.4 251.7 L88.9 251.7 L91.5 276.1 L93.2 270.1 L96.1 252.2 L102.2 252.2 L104.6 276.1 L106 270.1 L109.4 252.2 L148.5 252.2 L149.4 254.8 L150.6 262.4 L152.8 264.1 L155 252.2 L157.9 252.2 L160.1 271.8 L161.3 265 L163.8 252.2 L254 252.2 L255.2 290.5 L256.6 236.1 L257.8 216.5 L259.1 219 L260.9 234.4 L262.9 244.9 L264.3 234.4 L266.3 213.9 L268 202 L269.4 213.9 L270.7 224.1 L290.6 224.5 L292.3 245.4 L306.8 245.4 L309.9 207.1 L312.3 232.7 L313.3 225.9 L314 218.2 L315.3 229.3 L317 245.4 L319.1 245.4 L320.4 224.1 L322.1 202 L323.8 215.6 L325.5 225 L327.2 225 L328.9 245.4 L330.3 229.3 L331.8 218.2 L333.2 229.3 L334.9 245.4 L337.4 245.4 L339.1 231 L340.9 218.2 L342.6 225.9 L344.3 231.8 L347.3 217.7 L349 225 L354.5 225 L356.2 234.4 L357.9 245.8 L363.8 245.8 L365.5 234.4 L367.7 224.5 L368.9 229.3 L370.1 224.5 L371.5 234.4 L373.5 245.8 L375.7 245.8 L377.4 234.4 L378.6 225 L380.3 225 L382 234.4 L385.1 245.4 L387.7 245.4 L389.9 224.5 L390.7 234.4 L391.9 245.4 L400.4 245.4 L401.8 234.4 L403.3 216.5 L405.9 236.1 L407.2 227.6 L408.4 224.5 L411.5 245.4 L455.7 245.4 L456.9 290.5 L460 266.7 L461.7 265 L463.4 246.3 L464.8 258.2 L466.8 266.7 L467.7 276.6 L470.2 276.6 L471.1 261.6 L471.9 251.7 L478.7 251.7 L479.6 261.6 L480.8 272.7 L482.1 261.6 L483.8 251.7 L487.2 251.7 L489.3 276.1 L495.7 276.1 L497.4 261.6 L499.1 252.2 L923 252.2 L924.3 256.5 L926.4 261.6 L928.9 259.6 L940 258.2 L943.4 254.8 L947.7 258.2 L951.9 257.3 L955.3 252.2 L957.9 253.1 L961.3 257.3 L965.5 254.8 L979.1 254.8 L981.7 257.3 L984.3 254.4 L986.8 257.3 L989.4 252.2 L1026 252.2 L1028.5 254.4 L1033.6 254.4 L1036.2 252.2 L1039.6 252.2 L1041.3 263.3 L1043.5 275.2 L1045.5 263.3 L1048.1 253.1 L1051.5 252.2 L1052.7 263.3 L1055.2 275.2 L1058.8 252.2 L1062.2 252.2 L1064.3 265 L1065.6 252.2 L1139.1 252.2 L1141.2 259 L1146.8 259.9 L1148 266.7 L1150.2 273.5 L1151.9 276.1 L1153.6 265 L1154.8 252.2 L1157 252.2 L1158.7 256.8 L1173.2 256.8 L1175.7 259.6 L1179.1 259.6 L1181.7 256.8 L1190.2 256.5 L1192.8 252.2 L1245 252.3 L1248.2 275.3 L1252.7 274.2 L1254.1 265.7 L1257.3 265.1 L1259 262.3 L1260.7 261.4 L1262.4 264 L1264.1 265.9 L1268.6 265.9 L1270.9 264.5 L1272 262.8 L1273.7 263.4 L1275.4 264.5 L1277.1 275.9 L1278.2 275.9 L1279.4 269.1 L1281.5 252.3" stroke="#1700ca" stroke-opacity=".75" stroke-width="2"/>
<path d="M68.5 275.2 L71.9 271.8 L75.3 268.4 L77.9 253.1 L80.1 219 L83 218.2 L85.5 217 L86.9 221.6 L88.1 241.2 L89.8 264.1 L91.5 249.7 L93.2 219 L94.4 211.9 L96.6 215.3 L100 216 L102.2 214.8 L103.1 236.1 L104.6 273.5 L106 241.2 L107.3 213.1 L109.4 213.9 L112.8 215.6 L116.2 216.5 L118.7 217.3 L120.4 215.3 L121.6 221.6 L123.8 225.9 L126.4 226.7 L128.9 219 L131.5 220.7 L134.9 221.1 L138.3 220.4 L141.7 221.6 L144.3 223.3 L146 225.9 L147.7 229.6 L149.4 218.2 L150.2 217.3 L151.1 241.2 L151.9 256.5 L153.3 253.1 L154.5 236.1 L155.7 219 L157.4 216.5 L158.4 213.9 L159.1 241.2 L160.1 258.2 L160.8 236.1 L161.6 212.2 L163.8 212.7 L168.9 214.3 L175.7 215.3 L182.6 213.9 L189.4 215.3 L196.2 216.5 L203 216.7 L209.8 216 L216.6 213.9 L223.4 210.5 L230.2 206.3 L237 202.9 L243.8 201.7 L247.2 201.3 L250.6 202.9 L257.4 204.1 L260.9 205.1 L264.3 202.9 L267.7 202 L271.1 202.5 L277.9 202 L284.7 202.5 L289.8 202 L291.1 215.6 L292.3 226.7 L294 225 L295.7 212.2 L297.4 206.3 L299.8 205.4 L300 207.1 L301.7 210.5 L303.4 225 L306 221.6 L307.7 208.8 L309.4 202 L310.6 201.2 L311.6 205.4 L312.8 202 L314.5 229.3 L316.2 213.9 L317.9 205.4 L319.6 227.6 L321.3 212.2 L323 202 L325.5 200.3 L327.2 202 L328.9 207.1 L330.3 199.5 L331.5 210.5 L333.2 231 L334.9 253.1 L336.6 244.6 L338.3 219 L339.5 200.3 L340.9 210.5 L342.6 205.4 L345.1 201.2 L347.7 202 L350.2 201.7 L352.8 202 L354.5 210.5 L356.2 236.1 L357.9 256.5 L359.2 266.7 L360.9 253.1 L362.1 224.1 L363.3 236.1 L364.7 219 L367.2 218.2 L368.9 205.4 L370.6 201.2 L372.3 219 L374 256.5 L375.7 204.6 L377.4 205.4 L378.6 219 L380.3 215.6 L381.7 207.1 L383.4 207.1 L384.3 236.1 L386 258.2 L387.1 236.1 L388.2 215.6 L389.4 236.1 L391.1 261.6 L392.8 266.7 L394.5 244.6 L395.3 239.5 L396.7 253.1 L398.7 268.4 L400.4 253.1 L402.1 215.6 L403.8 216.5 L405.5 207.1 L406.9 202 L408.1 213.9 L409.8 236.1 L411.5 253.1 L413.2 258.2 L415.7 260.7 L419.1 261.6 L420.9 253.1 L422.2 244.6 L422.9 222.4 L423.9 244.6 L425.1 259.9 L426.8 263.3 L429.4 266.7 L432.8 268.4 L436.2 269.8 L438.7 270.1 L440.4 266.7 L441.3 236.1 L442.1 223.8 L446 223.8 L446.7 236.1 L447.7 266.7 L449.8 268.4 L453.2 267.6 L454.9 261.6 L456.6 259.9 L458.3 236.1 L459.1 219 L460 200 L460.9 219 L462.6 253.1 L464.3 241.2 L466 261.6 L467.7 258.2 L469.4 236.1 L470.6 209.7 L473.6 207.1 L477 203.4 L477.9 236.1 L478.7 266.7 L480.4 270.1 L481.8 236.1 L482.5 201.2 L487.2 202 L488.6 236.1 L489.8 270.1 L491.5 273.5 L494 273.5 L495.7 236.1 L497.1 203.4 L500.9 205.1 L507.7 206.3 L514.5 206.8 L521.3 206.3 L526.4 204.6 L527.2 219 L528.9 225.9 L530.1 219 L531.5 203.7 L534.9 205.4 L539.8 208 L540 208 L550.2 206.8 L562.1 205.4 L574 207.6 L587.7 208 L596.2 207.5 L602.1 208.5 L604.3 211.4 L607.2 209.2 L616.6 209.3 L628.5 210.9 L634.5 211.4 L645.5 210.9 L659.1 209.3 L669.4 208.8 L679.6 209.7 L689.8 210.9 L703.4 211 L717 210.9 L727.2 210.9 L732.3 211.9 L744.3 211.7 L757.9 212.2 L768.1 211.9 L779.8 211.4 L780 211.4 L797 210.5 L814 210.9 L824.3 210.5 L827.7 212.2 L829.4 215.3 L831.1 211.9 L848.1 211.9 L854.9 211.4 L858.6 213.1 L860.9 221.6 L863.1 214.8 L871.9 210.9 L878.7 210.5 L888.9 212.2 L895.7 214.3 L909.4 213.6 L919.6 213.9 L924.7 213.6 L933.2 215.3 L950.2 215.3 L960.4 216.5 L970.6 216.5 L980.9 217 L991.1 215.6 L1001.3 215.6 L1011.5 216.1 L1019.8 214.8 L1020 215.3 L1030.2 213.6 L1037 211.4 L1038.4 210.5 L1039.6 219 L1041.3 221.6 L1042.5 256.5 L1043.5 236.1 L1044.3 210.5 L1047.2 209.7 L1049.8 213.1 L1052.3 213.1 L1053.4 236.1 L1054.9 259.9 L1056.1 236.1 L1057.1 214.8 L1061.7 214.3 L1062.6 229.3 L1063.9 242.9 L1064.9 229.3 L1065.6 213.6 L1069.4 215.6 L1077.9 217 L1088.1 217.7 L1101.7 218.7 L1115.3 218.5 L1128.9 217.7 L1139.1 217.7 L1146 219.6 L1147.7 227.6 L1149.4 229.3 L1150.7 253.1 L1151.6 266.7 L1152.3 236.1 L1152.8 217 L1156.2 219 L1169.8 219.9 L1183.4 219 L1190.2 217 L1193.6 215.6 L1200.4 215.6 L1207.2 216.5 L1220.9 216.5 L1231.1 217.3 L1241.3 217 L1242.6 217.3 L1243.7 226 L1245 254.3 L1246.2 278.2 L1249.3 275.9 L1252.7 274.2 L1253.9 260 L1256.1 237.3 L1257.8 226 L1259.1 221.6 L1265.3 222.9 L1274.1 222.4 L1281.5 222 L1281.5 291 L68.5 291 Z" fill="#00ff00" fill-opacity=".25" stroke="none"/>
<path d="M68.5 275.2 L71.9 271.8 L75.3 268.4 L77.9 253.1 L80.1 219 L83 218.2 L85.5 217 L86.9 221.6 L88.1 241.2 L89.8 264.1 L91.5 249.7 L93.2 219 L94.4 211.9 L96.6 215.3 L100 216 L102.2 214.8 L103.1 236.1 L104.6 273.5 L106 241.2 L107.3 213.1 L109.4 213.9 L112.8 215.6 L116.2 216.5 L118.7 217.3 L120.4 215.3 L121.6 221.6 L123.8 225.9 L126.4 226.7 L128.9 219 L131.5 220.7 L134.9 221.1 L138.3 220.4 L141.7 221.6 L144.3 223.3 L146 225.9 L147.7 229.6 L149.4 218.2 L150.2 217.3 L151.1 241.2 L151.9 256.5 L153.3 253.1 L154.5 236.1 L155.7 219 L157.4 216.5 L158.4 213.9 L159.1 241.2 L160.1 258.2 L160.8 236.1 L161.6 212.2 L163.8 212.7 L168.9 214.3 L175.7 215.3 L182.6 213.9 L189.4 215.3 L196.2 216.5 L203 216.7 L209.8 216 L216.6 213.9 L223.4 210.5 L230.2 206.3 L237 202.9 L243.8 201.7 L247.2 201.3 L250.6 202.9 L257.4 204.1 L260.9 205.1 L264.3 202.9 L267.7 202 L271.1 202.5 L277.9 202 L284.7 202.5 L289.8 202 L291.1 215.6 L292.3 226.7 L294 225 L295.7 212.2 L297.4 206.3 L299.8 205.4 L300 207.1 L301.7 210.5 L303.4 225 L306 221.6 L307.7 208.8 L309.4 202 L310.6 201.2 L311.6 205.4 L312.8 202 L314.5 229.3 L316.2 213.9 L317.9 205.4 L319.6 227.6 L321.3 212.2 L323 202 L325.5 200.3 L327.2 202 L328.9 207.1 L330.3 199.5 L331.5 210.5 L333.2 231 L334.9 253.1 L336.6 244.6 L338.3 219 L339.5 200.3 L340.9 210.5 L342.6 205.4 L345.1 201.2 L347.7 202 L350.2 201.7 L352.8 202 L354.5 210.5 L356.2 236.1 L357.9 256.5 L359.2 266.7 L360.9 253.1 L362.1 224.1 L363.3 236.1 L364.7 219 L367.2 218.2 L368.9 205.4 L370.6 201.2 L372.3 219 L374 256.5 L375.7 204.6 L377.4 205.4 L378.6 219 L380.3 215.6 L381.7 207.1 L383.4 207.1 L384.3 236.1 L386 258.2 L387.1 236.1 L388.2 215.6 L389.4 236.1 L391.1 261.6 L392.8 266.7 L394.5 244.6 L395.3 239.5 L396.7 253.1 L398.7 268.4 L400.4 253.1 L402.1 215.6 L403.8 216.5 L405.5 207.1 L406.9 202 L408.1 213.9 L409.8 236.1 L411.5 253.1 L413.2 258.2 L415.7 260.7 L419.1 261.6 L420.9 253.1 L422.2 244.6 L422.9 222.4 L423.9 244.6 L425.1 259.9 L426.8 263.3 L429.4 266.7 L432.8 268.4 L436.2 269.8 L438.7 270.1 L440.4 266.7 L441.3 236.1 L442.1 223.8 L446 223.8 L446.7 236.1 L447.7 266.7 L449.8 268.4 L453.2 267.6 L454.9 261.6 L456.6 259.9 L458.3 236.1 L459.1 219 L460 200 L460.9 219 L462.6 253.1 L464.3 241.2 L466 261.6 L467.7 258.2 L469.4 236.1 L470.6 209.7 L473.6 207.1 L477 203.4 L477.9 236.1 L478.7 266.7 L480.4 270.1 L481.8 236.1 L482.5 201.2 L487.2 202 L488.6 236.1 L489.8 270.1 L491.5 273.5 L494 273.5 L495.7 236.1 L497.1 203.4 L500.9 205.1 L507.7 206.3 L514.5 206.8 L521.3 206.3 L526.4 204.6 L527.2 219 L528.9 225.9 L530.1 219 L531.5 203.7 L534.9 205.4 L539.8 208 L540 208 L550.2 206.8 L562.1 205.4 L574 207.6 L587.7 208 L596.2 207.5 L602.1 208.5 L604.3 211.4 L607.2 209.2 L616.6 209.3 L628.5 210.9 L634.5 211.4 L645.5 210.9 L659.1 209.3 L669.4 208.8 L679.6 209.7 L689.8 210.9 L703.4 211 L717 210.9 L727.2 210.9 L732.3 211.9 L744.3 211.7 L757.9 212.2 L768.1 211.9 L779.8 211.4 L780 211.4 L797 210.5 L814 210.9 L824.3 210.5 L827.7 212.2 L829.4 215.3 L831.1 211.9 L848.1 211.9 L854.9 211.4 L858.6 213.1 L860.9 221.6 L863.1 214.8 L871.9 210.9 L878.7 210.5 L888.9 212.2 L895.7 214.3 L909.4 213.6 L919.6 213.9 L924.7 213.6 L933.2 215.3 L950.2 215.3 L960.4 216.5 L970.6 216.5 L980.9 217 L991.1 215.6 L1001.3 215.6 L1011.5 216.1 L1019.8 214.8 L1020 215.3 L1030.2 213.6 L1037 211.4 L1038.4 210.5 L1039.6 219 L1041.3 221.6 L1042.5 256.5 L1043.5 236.1 L1044.3 210.5 L1047.2 209.7 L1049.8 213.1 L1052.3 213.1 L1053.4 236.1 L1054.9 259.9 L1056.1 236.1 L1057.1 214.8 L1061.7 214.3 L1062.6 229.3 L1063.9 242.9 L1064.9 229.3 L1065.6 213.6 L1069.4 215.6 L1077.9 217 L1088.1 217.7 L1101.7 218.7 L1115.3 218.5 L1128.9 217.7 L1139.1 217.7 L1146 219.6 L1147.7 227.6 L1149.4 229.3 L1150.7 253.1 L1151.6 266.7 L1152.3 236.1 L1152.8 217 L1156.2 219 L1169.8 219.9 L1183.4 219 L1190.2 217 L1193.6 215.6 L1200.4 215.6 L1207.2 216.5 L1220.9 216.5 L1231.1 217.3 L1241.3 217 L1242.6 217.3 L1243.7 226 L1245 254.3 L1246.2 278.2 L1249.3 275.9 L1252.7 274.2 L1253.9 260 L1256.1 237.3 L1257.8 226 L1259.1 221.6 L1265.3 222.9 L1274.1 222.4 L1281.5 222" stroke="#46f546" stroke-opacity=".85" stroke-width="1.05"/>
<path d="M68.5 276.1 L75.5 276.1 L80.5 253 L81 251.7 L83 251.8 L84.5 256 L85 255.6 L86.5 251.7 L88.5 251.7 L89 252.3 L91.5 276 L93 270.8 L96 252.8 L96.5 252.2 L102 252.2 L102.5 255.3 L104.5 275.2 L105 274.3 L106 269.9 L109.5 252.2 L148.5 252.2 L149.5 255.7 L150.5 262.1 L151 262.8 L152.5 263.9 L153 262.9 L155 252.2 L157.5 252.2 L158 253.4 L160 271.1 L160.5 269.4 L163.5 253.9 L164 252.2 L254 252.2 L255 283.5 L255.5 279.9 L256.5 239.9 L257.5 221.2 L258 216.9 L259 218.7 L261 235.1 L262.5 242.9 L263 244.1 L266.5 212.5 L268 202 L270.5 222.4 L271 224.1 L290.5 224.5 L292.5 245.4 L306.5 245.4 L307 242.9 L309.5 211.6 L310 208.4 L312 229.7 L312.5 231 L314 218.5 L317 245.2 L317.5 245.4 L319 245.4 L322 203.6 L322.5 205 L324 216.5 L325.5 224.8 L327 225 L327.5 228.2 L329 244.6 L330.5 227.8 L331.5 220.5 L332 219.5 L335 245.4 L337 245.4 L337.5 244.9 L340.5 220.8 L341 218.8 L342.5 225.6 L344 230.9 L344.5 230.7 L347 219.2 L347.5 218.4 L349 224.9 L354 225 L354.5 225.1 L358 245.7 L363.5 245.7 L364 244.6 L365.5 234.5 L367.5 225.5 L368 225.5 L369 229 L370 225 L373.5 245.5 L375.5 245.7 L376 244 L378.5 226 L379 225 L380 225 L380.5 225.8 L382 234.1 L385 245 L385.5 245.4 L387.5 245.4 L389.5 228 L390 225.9 L392 245.4 L400 245.4 L400.5 244.8 L402 231.8 L403 220.2 L403.5 217.9 L405.5 233.4 L406 235.2 L407.5 226.8 L408 225.5 L408.5 225 L411.5 245.4 L455.5 245.4 L456 253.5 L457 290 L460 266.7 L461.5 265.2 L463.5 247.1 L465 259.1 L466.5 265.4 L467.5 274.7 L468 276.5 L470 276.5 L472 251.7 L478.5 251.7 L479 254.9 L480.5 270.1 L481 270.7 L482.5 259.4 L484 251.7 L487 251.7 L487.5 254.8 L489 272.7 L489.5 276 L495.5 276 L496 273.8 L497.5 261.2 L499 253 L499.5 252.2 L922.5 252.1 L923 252.2 L924.5 256.8 L926.5 261.4 L929 259.4 L940 258.1 L943.5 254.8 L947.5 258 L951.5 257.3 L952 257.1 L955 252.6 L955.5 252.2 L958 253.1 L961 256.9 L961.5 257.1 L965.5 254.7 L966 254.7 L979 254.7 L981.5 257 L982 256.9 L984 254.6 L984.5 254.6 L986.5 256.9 L987 256.8 L989.5 252.1 L1025.5 252.1 L1026 252.2 L1028.5 254.3 L1033.5 254.3 L1036 252.3 L1039.5 252.1 L1043.5 275 L1045.5 263.4 L1048 253.3 L1048.5 252.9 L1051 252.2 L1051.5 252.2 L1053 264.7 L1055 274 L1055.5 273.4 L1058.5 254.1 L1059 252.1 L1062 252.1 L1062.5 254 L1064 263.3 L1064.5 262.6 L1065.5 253.2 L1066 252.1 L1139 252.1 L1141 258.3 L1141.5 259 L1146.5 259.7 L1147 260.9 L1148 266.6 L1150 272.7 L1151.5 275.3 L1152 275.4 L1153.5 265.6 L1155 252.1 L1157 252.1 L1158.5 256.1 L1159 256.7 L1173 256.7 L1176 259.4 L1179 259.4 L1181.5 256.9 L1182 256.7 L1190 256.4 L1190.5 255.9 L1192.5 252.5 L1193 252.1 L1245 252.2 L1248 273.7 L1248.5 275.1 L1249 275 L1249.5 273.5 L1251.5 255.8 L1254 200.7 L1259 175.1 L1260 171 L1260.5 170.4 L1263.5 190.9 L1264 191.5 L1268.5 190.8 L1269 189.8 L1270.5 183.7 L1272 180.1 L1272.5 181.6 L1275.5 213.7 L1276 214.9 L1277 230.1 L1277.5 231.9 L1278 231.9 L1278.5 228.2 L1279 221 L1280.5 195.4 L1281.5 136.6 L1281.5 291 L68.5 291 Z" fill="#0000fa" fill-opacity=".1" stroke="none"/>
<path d="M68.5 276.1 L75.5 276.1 L80.5 253 L81 251.7 L83 251.8 L84.5 256 L85 255.6 L86.5 251.7 L88.5 251.7 L89 252.3 L91.5 276 L93 270.8 L96 252.8 L96.5 252.2 L102 252.2 L102.5 255.3 L104.5 275.2 L105 274.3 L106 269.9 L109.5 252.2 L148.5 252.2 L149.5 255.7 L150.5 262.1 L151 262.8 L152.5 263.9 L153 262.9 L155 252.2 L157.5 252.2 L158 253.4 L160 271.1 L160.5 269.4 L163.5 253.9 L164 252.2 L254 252.2 L255 283.5 L255.5 279.9 L256.5 239.9 L257.5 221.2 L258 216.9 L259 218.7 L261 235.1 L262.5 242.9 L263 244.1 L266.5 212.5 L268 202 L270.5 222.4 L271 224.1 L290.5 224.5 L292.5 245.4 L306.5 245.4 L307 242.9 L309.5 211.6 L310 208.4 L312 229.7 L312.5 231 L314 218.5 L317 245.2 L317.5 245.4 L319 245.4 L322 203.6 L322.5 205 L324 216.5 L325.5 224.8 L327 225 L327.5 228.2 L329 244.6 L330.5 227.8 L331.5 220.5 L332 219.5 L335 245.4 L337 245.4 L337.5 244.9 L340.5 220.8 L341 218.8 L342.5 225.6 L344 230.9 L344.5 230.7 L347 219.2 L347.5 218.4 L349 224.9 L354 225 L354.5 225.1 L358 245.7 L363.5 245.7 L364 244.6 L365.5 234.5 L367.5 225.5 L368 225.5 L369 229 L370 225 L373.5 245.5 L375.5 245.7 L376 244 L378.5 226 L379 225 L380 225 L380.5 225.8 L382 234.1 L385 245 L385.5 245.4 L387.5 245.4 L389.5 228 L390 225.9 L392 245.4 L400 245.4 L400.5 244.8 L402 231.8 L403 220.2 L403.5 217.9 L405.5 233.4 L406 235.2 L407.5 226.8 L408 225.5 L408.5 225 L411.5 245.4 L455.5 245.4 L456 253.5 L457 290 L460 266.7 L461.5 265.2 L463.5 247.1 L465 259.1 L466.5 265.4 L467.5 274.7 L468 276.5 L470 276.5 L472 251.7 L478.5 251.7 L479 254.9 L480.5 270.1 L481 270.7 L482.5 259.4 L484 251.7 L487 251.7 L487.5 254.8 L489 272.7 L489.5 276 L495.5 276 L496 273.8 L497.5 261.2 L499 253 L499.5 252.2 L922.5 252.1 L923 252.2 L924.5 256.8 L926.5 261.4 L929 259.4 L940 258.1 L943.5 254.8 L947.5 258 L951.5 257.3 L952 257.1 L955 252.6 L955.5 252.2 L958 253.1 L961 256.9 L961.5 257.1 L965.5 254.7 L966 254.7 L979 254.7 L981.5 257 L982 256.9 L984 254.6 L984.5 254.6 L986.5 256.9 L987 256.8 L989.5 252.1 L1025.5 252.1 L1026 252.2 L1028.5 254.3 L1033.5 254.3 L1036 252.3 L1039.5 252.1 L1043.5 275 L1045.5 263.4 L1048 253.3 L1048.5 252.9 L1051 252.2 L1051.5 252.2 L1053 264.7 L1055 274 L1055.5 273.4 L1058.5 254.1 L1059 252.1 L1062 252.1 L1062.5 254 L1064 263.3 L1064.5 262.6 L1065.5 253.2 L1066 252.1 L1139 252.1 L1141 258.3 L1141.5 259 L1146.5 259.7 L1147 260.9 L1148 266.6 L1150 272.7 L1151.5 275.3 L1152 275.4 L1153.5 265.6 L1155 252.1 L1157 252.1 L1158.5 256.1 L1159 256.7 L1173 256.7 L1176 259.4 L1179 259.4 L1181.5 256.9 L1182 256.7 L1190 256.4 L1190.5 255.9 L1192.5 252.5 L1193 252.1 L1245 252.2 L1248 273.7 L1248.5 275.1 L1249 275 L1249.5 273.5 L1251.5 255.8 L1254 200.7 L1259 175.1 L1260 171 L1260.5 170.4 L1263.5 190.9 L1264 191.5 L1268.5 190.8 L1269 189.8 L1270.5 183.7 L1272 180.1 L1272.5 181.6 L1275.5 213.7 L1276 214.9 L1277 230.1 L1277.5 231.9 L1278 231.9 L1278.5 228.2 L1279 221 L1280.5 195.4 L1281.5 136.6" stroke="#0000fa" stroke-opacity=".12" stroke-width="1.5"/>
<path d="M68.5 263.6 L69.9 280.3 L71.1 283.7 L77 282.9 L79.1 279.5 L80.4 270.1 L81.8 263.6 L83 273.5 L84.2 282 L85.9 284.6 L88.1 280.3 L90.6 275.2 L93.2 279.5 L95.7 282 L98.3 278.6 L101.7 278.3 L103.4 275.2 L104.6 272.7 L106 280.3 L109.4 281.2 L112.8 282.4 L117 282 L118.7 284.6 L120.4 282.9 L122.1 277.8 L123.8 276.9 L125.5 283.7 L128.1 282.9 L131.5 283.4 L136.6 282 L141.7 282.4 L146 282 L147.1 270.1 L148.2 255.1 L149.4 266.7 L150.6 280.3 L151.6 289.7 L153.3 285.4 L155.3 277.8 L156.5 275.6 L157.9 282 L159.6 280.3 L161.3 282 L163.8 285.4 L166.4 281.2 L168.9 280.3 L174 280 L179.1 279.5 L180.9 273.5 L182.2 264.7 L186 265 L191.1 265.3 L196.2 264.7 L201.3 265 L204.7 266.4 L208.1 265.3 L210.1 274.4 L212.3 265.9 L214 265 L215.7 277.8 L217.4 265.9 L219.1 276.9 L220.9 266.4 L223.1 266.7 L224.3 280.3 L227.7 282 L233.6 281.7 L240.4 281.3 L245.5 280.3 L246.4 278.3 L254 278.6 L255.7 278.3 L257.4 287.1 L259.1 273.5 L260.9 262.4 L262.2 270.1 L263.4 278.6 L266 278.3 L267.3 285.4 L268.5 288.8 L270.2 282.9 L272.8 280.7 L279.6 280.3 L286.4 280 L289.8 277.8 L291.5 270.1 L293.2 269.3 L294.9 251.4 L298.3 251 L299.8 258.2 L300 259.9 L301.7 265 L303.1 244.6 L304.3 259.9 L305.4 276.9 L307.7 281.2 L309.4 277.8 L311.1 277.8 L312.8 287.1 L314.5 259.9 L315.7 245.4 L317 246.3 L318.4 276.9 L320.4 282 L322.1 287.1 L323.8 277.8 L325.5 276.9 L327.2 267.6 L328.9 280.3 L330.6 285.4 L331.8 253.1 L333.2 256.5 L334.4 276.9 L336.1 267.6 L337.8 268.4 L339.5 285.4 L341.7 279.5 L343.4 278.6 L345.1 286.8 L346.8 282 L351.1 282 L354.5 281.2 L356.2 273.5 L357.4 268.7 L358.7 276.9 L360.4 282.9 L363 282.4 L364.7 283.7 L366.4 285.4 L368.9 283.7 L370.6 276.9 L371.8 265 L372.9 256.8 L374 270.1 L375.2 277.8 L377.4 282.9 L380 280.3 L381.7 273.5 L384.3 275.2 L386 276.9 L387.7 282 L389.4 284.6 L391.1 276.9 L392.8 266.7 L395 267 L396.2 282.9 L400.4 282.9 L402.1 287.1 L403.8 282.9 L405.5 275.2 L406.9 287.1 L408.9 288.8 L411.5 280.3 L414 268.4 L416.6 261.9 L418.3 270.1 L420 276.9 L421.2 261.6 L422 248.3 L422.9 261.6 L423.7 275.2 L425.1 260.7 L426.8 264.1 L429.4 276.9 L431.9 279.5 L434.5 280.3 L436.2 282.9 L438.7 281.2 L441.3 280.3 L443.8 275.2 L445.5 270.4 L447.2 280.3 L448.9 283.7 L450.6 280.3 L453.2 282.9 L455.7 283.4 L457.4 273.5 L458.3 285.4 L460 266.7 L461.7 280.3 L463.1 253.1 L464.1 246.6 L465.1 259.9 L466 282 L467.1 258.2 L469.4 256.8 L471.9 257.3 L474.5 260.7 L476.2 270.1 L477.4 282.9 L479.6 277.8 L482.1 276.9 L483.8 272.7 L485.5 279.5 L487.2 283.7 L489.8 280.3 L491.5 282.9 L494 276.1 L495.7 277.8 L498.3 283.7 L500 290.5 L501.2 281.2 L504.3 281.2 L509.4 280.3 L512.8 279 L517.9 278.3 L521.3 279.5 L524.7 280.3 L526.4 290.5 L527.2 282 L528.1 276.1 L529.8 282 L534.9 282.4 L539.8 281.7 L540 281.2 L557 281.2 L567.2 279.5 L582.6 280.3 L586 281.5 L599.6 280.3 L602.6 279.5 L604.2 276.9 L606.4 278.3 L613.2 278.6 L618.3 281.2 L623.4 282 L628.5 280.7 L643.8 280.7 L647.2 282 L666 282 L669.4 280 L684.7 280.3 L689.8 282.4 L700 282.4 L705.1 279.5 L717 279.5 L720.4 281.7 L727.2 281.2 L730.6 277.8 L733.2 281.2 L749.4 282.4 L774.9 281.7 L779.8 280.3 L780 280.7 L795.3 282 L802.1 282.4 L810.6 279.5 L821.7 279.1 L825.1 282 L827.7 283.7 L829.4 281.2 L848.1 282 L888.9 282 L892.3 280.7 L916.2 280.7 L921.3 280.3 L922.6 266.7 L923.8 253.9 L925.5 256.5 L936.6 256.5 L940 258.2 L942.6 260.7 L945.1 258.5 L950.2 258.2 L952.8 263.3 L955.3 263.6 L958.7 259.6 L963.8 263.3 L967.2 262.4 L977.4 262.4 L980 260.7 L986 261.6 L987.3 273.5 L988.5 285.4 L989.7 287.1 L991.1 282.9 L1001.3 282.9 L1008.1 283.4 L1009.8 281.7 L1011.5 283.7 L1018.3 282.9 L1019.8 282 L1020 282 L1025.1 282.4 L1026.5 270.1 L1027.7 259.9 L1030.2 259.9 L1035.3 263.6 L1037.9 259.9 L1040.4 251.4 L1042.1 248 L1043.5 240.8 L1044.7 253.1 L1045.9 265 L1048.1 267.6 L1049.8 256.5 L1051.8 247.6 L1052.7 261.6 L1054 276.9 L1055.7 285.4 L1058.3 283.7 L1060.9 280.3 L1062.6 273.5 L1064.6 265.9 L1066 273.5 L1067.3 283.7 L1077.9 283.7 L1083 282.9 L1105.1 283.7 L1122.1 283.4 L1135.7 283.4 L1137.1 273.5 L1138.3 263.3 L1140 259.9 L1146 259.9 L1147.3 256.5 L1149.4 259.9 L1151.9 263.3 L1153.6 270.1 L1155 274.4 L1155.8 263.3 L1164.7 263 L1169.8 263 L1174 260.7 L1180 262.4 L1190.2 262.4 L1191.1 273.5 L1191.9 287.1 L1193.6 284.6 L1210.6 284.6 L1212 289.2 L1213.2 284.6 L1224.3 284.6 L1226.8 282 L1237 282.9 L1238 282.1 L1240.3 284.4 L1242.5 285.5 L1244.8 285 L1247.1 287.2 L1249.3 289.5 L1251 290.6 L1255 290.1 L1257.8 285 L1260.1 283.8 L1261.8 281.6 L1262.9 280.4 L1264.3 283.3 L1265.8 282.7 L1267.5 284.4 L1269.2 286.1 L1270.3 288.4 L1271.8 287.8 L1273.1 273.6 L1274.5 261.7 L1277.1 261.1 L1277.9 273.6 L1278.8 284.4 L1280.5 282.7 L1281.5 282.1" stroke="#0a0a0a" stroke-opacity=".8" stroke-width="2"/>
<path d="M68.5 291 L77 291 L78.5 298.1 L79 297.4 L80 291.7 L80.5 281.8 L81.5 287.3 L83 291 L102.5 291 L104 304.8 L104.5 303.2 L105.5 292.5 L106 291 L177 291 L177.5 291 L180 287.1 L181.5 290.6 L182 291 L208 291 L210 286.9 L210.5 286.8 L212 291 L214 291 L215.5 303.5 L216 302.7 L217 292.7 L217.5 289.8 L219 286.6 L219.5 287.3 L221 291 L252.5 291 L253 291.8 L254 303.9 L254.5 306.8 L255 298.3 L255.5 279.7 L256 280.3 L257 290 L257.5 289.2 L258 286.8 L258.5 286.4 L259.5 291 L264 291 L264.5 290.6 L266 288.1 L267.5 290.8 L268 291 L269 291 L269.5 291.7 L271 298.5 L272.5 291 L302 291 L302.5 291.6 L303.5 294.7 L304 294.1 L305 291 L306.5 291 L307 290.7 L309 287.7 L309.5 287.3 L312 291 L318.5 291 L320.5 288.9 L322 290.9 L328 291 L329.5 287.8 L330 287.6 L331.5 291 L339 291 L340.5 287.9 L341 287.5 L342.5 290.9 L345 291 L346.5 285.7 L347 285.3 L348.5 291 L363 291 L364.5 288.3 L365 288.6 L366.5 291 L375.5 291 L376 290.6 L377.5 288.1 L379 290.8 L379.5 291 L386.5 291 L387 290.7 L388.5 288 L390 290.7 L390.5 291 L400 291 L400.5 290.9 L402 287.4 L402.5 288 L404 291 L411.5 291 L412.5 286.9 L414.5 283.3 L416 278.1 L417.5 285.5 L419 287 L421 283.8 L422.5 285.1 L423 284.9 L425 274.4 L425.5 276.1 L428 291 L454.5 291 L455 295.1 L456.5 316.7 L458 296.5 L458.5 293.5 L459 291 L460 291 L461.5 289.1 L462 289.2 L463.5 291 L467.5 291 L469 297.8 L470 291 L472 290.9 L473.5 288.7 L475.5 291 L479 291 L479.5 291.9 L480.5 295.4 L481 294.4 L482 291 L483.5 288.6 L484 288.3 L485.5 291 L495 291 L496 295.2 L496.5 294.7 L497 292.9 L497.5 289.4 L498 288.5 L498.5 288.3 L500 291 L922 291 L922.5 287.1 L923.5 268.3 L924.5 287.6 L925 291 L1051.5 291 L1053 311.2 L1053.5 307.7 L1054.5 294.1 L1055 291.9 L1055.5 285.5 L1057 282.2 L1059 291 L1084.5 291 L1085.5 294 L1086 293.1 L1086.5 291 L1147 291 L1148 295 L1149 291 L1152.5 291 L1153 290.7 L1154.5 288.9 L1156 290.8 L1156.5 291 L1174 291 L1174.5 291.3 L1175 292.5 L1175.5 292.6 L1176 291.4 L1176.5 291 L1249.5 290.9 L1250.5 292.9 L1251.5 291.4 L1252.5 293.4 L1253 292.8 L1253.5 286.1 L1254 283.6 L1254.5 282.5 L1255.5 288.9 L1256.5 290.6 L1257 290.2 L1258 288.3 L1259 287.8 L1260 289.3 L1261 287.7 L1261.5 288 L1262.5 290.6 L1267 290.3 L1268 292.3 L1269.5 292.8 L1270 292.4 L1270.5 291.5 L1271 290.1 L1273.5 290.9 L1277.5 290.9 L1279 289.5 L1280 284.7 L1281 267.1 L1281.5 252.3 L1281.5 291 L68.5 291 Z" fill="#ff0a1e" fill-opacity=".3" stroke="none"/>
<path d="M68.5 291 L77 291 L78.5 298.1 L79 297.4 L80 291.7 L80.5 281.8 L81.5 287.3 L83 291 L102.5 291 L104 304.8 L104.5 303.2 L105.5 292.5 L106 291 L177 291 L177.5 291 L180 287.1 L181.5 290.6 L182 291 L208 291 L210 286.9 L210.5 286.8 L212 291 L214 291 L215.5 303.5 L216 302.7 L217 292.7 L217.5 289.8 L219 286.6 L219.5 287.3 L221 291 L252.5 291 L253 291.8 L254 303.9 L254.5 306.8 L255 298.3 L255.5 279.7 L256 280.3 L257 290 L257.5 289.2 L258 286.8 L258.5 286.4 L259.5 291 L264 291 L264.5 290.6 L266 288.1 L267.5 290.8 L268 291 L269 291 L269.5 291.7 L271 298.5 L272.5 291 L302 291 L302.5 291.6 L303.5 294.7 L304 294.1 L305 291 L306.5 291 L307 290.7 L309 287.7 L309.5 287.3 L312 291 L318.5 291 L320.5 288.9 L322 290.9 L328 291 L329.5 287.8 L330 287.6 L331.5 291 L339 291 L340.5 287.9 L341 287.5 L342.5 290.9 L345 291 L346.5 285.7 L347 285.3 L348.5 291 L363 291 L364.5 288.3 L365 288.6 L366.5 291 L375.5 291 L376 290.6 L377.5 288.1 L379 290.8 L379.5 291 L386.5 291 L387 290.7 L388.5 288 L390 290.7 L390.5 291 L400 291 L400.5 290.9 L402 287.4 L402.5 288 L404 291 L411.5 291 L412.5 286.9 L414.5 283.3 L416 278.1 L417.5 285.5 L419 287 L421 283.8 L422.5 285.1 L423 284.9 L425 274.4 L425.5 276.1 L428 291 L454.5 291 L455 295.1 L456.5 316.7 L458 296.5 L458.5 293.5 L459 291 L460 291 L461.5 289.1 L462 289.2 L463.5 291 L467.5 291 L469 297.8 L470 291 L472 290.9 L473.5 288.7 L475.5 291 L479 291 L479.5 291.9 L480.5 295.4 L481 294.4 L482 291 L483.5 288.6 L484 288.3 L485.5 291 L495 291 L496 295.2 L496.5 294.7 L497 292.9 L497.5 289.4 L498 288.5 L498.5 288.3 L500 291 L922 291 L922.5 287.1 L923.5 268.3 L924.5 287.6 L925 291 L1051.5 291 L1053 311.2 L1053.5 307.7 L1054.5 294.1 L1055 291.9 L1055.5 285.5 L1057 282.2 L1059 291 L1084.5 291 L1085.5 294 L1086 293.1 L1086.5 291 L1147 291 L1148 295 L1149 291 L1152.5 291 L1153 290.7 L1154.5 288.9 L1156 290.8 L1156.5 291 L1174 291 L1174.5 291.3 L1175 292.5 L1175.5 292.6 L1176 291.4 L1176.5 291 L1249.5 290.9 L1250.5 292.9 L1251.5 291.4 L1252.5 293.4 L1253 292.8 L1253.5 286.1 L1254 283.6 L1254.5 282.5 L1255.5 288.9 L1256.5 290.6 L1257 290.2 L1258 288.3 L1259 287.8 L1260 289.3 L1261 287.7 L1261.5 288 L1262.5 290.6 L1267 290.3 L1268 292.3 L1269.5 292.8 L1270 292.4 L1270.5 291.5 L1271 290.1 L1273.5 290.9 L1277.5 290.9 L1279 289.5 L1280 284.7 L1281 267.1 L1281.5 252.3" stroke="#f0142d" stroke-opacity=".9" stroke-width="1.3" transform="translate(0 -.45)"/>
</g>
<text x="57.5" y="114.2" text-anchor="end">16</text>
<text x="57.5" y="159.5" text-anchor="end">12</text>
<text x="57.5" y="204.7" text-anchor="end">8</text>
<text x="57.5" y="249.9" text-anchor="end">4</text>
<text x="57.5" y="295.2" text-anchor="end">0</text>
<text x="57.5" y="340.4" text-anchor="end">-4</text>
<text x="57.5" y="385.7" text-anchor="end">-8</text>
<text x="1292.5" y="114.2">100</text>
<text x="1292.5" y="141.3">90</text>
<text x="1292.5" y="168.5">80</text>
<text x="1292.5" y="195.6">70</text>
<text x="1292.5" y="222.8">60</text>
<text x="1292.5" y="249.9">50</text>
<text x="1292.5" y="277.1">40</text>
<text x="1292.5" y="304.2">30</text>
<text x="1292.5" y="331.4">20</text>
<text x="1292.5" y="358.6">10</text>
<text x="1292.5" y="385.7">0</text>
<text transform="translate(34.5 245.5) rotate(-90)" text-anchor="middle">Leistung [kW]</text>
<text transform="translate(1322.5 245.5) rotate(90)" text-anchor="middle">SoC [%]</text>
<text transform="translate(73.9 397.4) rotate(-47)" text-anchor="end" y="4">11:11</text>
<text transform="translate(143.9 397.4) rotate(-47)" text-anchor="end" y="4">11:25</text>
<text transform="translate(213.8 397.4) rotate(-47)" text-anchor="end" y="4">11:39</text>
<text transform="translate(284.9 397.4) rotate(-47)" text-anchor="end" y="4">11:53</text>
<text transform="translate(355.9 397.4) rotate(-47)" text-anchor="end" y="4">12:07</text>
<text transform="translate(426.8 397.4) rotate(-47)" text-anchor="end" y="4">12:21</text>
<text transform="translate(497.7 397.4) rotate(-47)" text-anchor="end" y="4">12:35</text>
<text transform="translate(568.7 397.4) rotate(-47)" text-anchor="end" y="4">12:49</text>
<text transform="translate(639.8 397.4) rotate(-47)" text-anchor="end" y="4">13:03</text>
<text transform="translate(710.9 397.4) rotate(-47)" text-anchor="end" y="4">13:17</text>
<text transform="translate(782 397.4) rotate(-47)" text-anchor="end" y="4">13:31</text>
<text transform="translate(853.1 397.4) rotate(-47)" text-anchor="end" y="4">13:45</text>
<text transform="translate(924.1 397.4) rotate(-47)" text-anchor="end" y="4">13:59</text>
<text transform="translate(995.1 397.4) rotate(-47)" text-anchor="end" y="4">14:13</text>
<text transform="translate(1065.9 397.4) rotate(-47)" text-anchor="end" y="4">14:27</text>
<text transform="translate(1137 397.4) rotate(-47)" text-anchor="end" y="4">14:41</text>
<text transform="translate(1207.9 397.4) rotate(-47)" text-anchor="end" y="4">14:55</text>
<text transform="translate(1279 397.4) rotate(-47)" text-anchor="end" y="4">15:09</text>
<rect x="147.5" y="88" width="40" height="12" fill="#ff0a1e" fill-opacity="0.3" stroke="#f0142dc0" stroke-width="1.1"/>
<text x="193.5" y="98.3">EVU</text>
<rect x="226.5" y="88" width="40" height="12" fill="#000" fill-opacity="0.2" stroke="#2a2a2a" stroke-width="2.2"/>
<text x="272.5" y="98.3">Hausverbrauch</text>
<rect x="364.5" y="88" width="40" height="12" fill="#0000fa" fill-opacity="0.1" stroke="#0000fa26" stroke-width="1.5"/>
<text x="410.5" y="98.3">LP ges.</text>
<rect x="460.5" y="88" width="40" height="12" fill="#00ff00" fill-opacity="0.25" stroke="#1ee61eb3" stroke-width="1.5"/>
<text x="506.5" y="98.3">PV ges.</text>
<rect x="557.5" y="88" width="40" height="12" fill="#1e14f0" fill-opacity="0.72" stroke="#1e14f0" stroke-width="2"/>
<text x="603.5" y="98.3">LP 3</text>
<rect x="638" y="88" width="40" height="12" fill="#1e14f0" fill-opacity="0.72" stroke="#1e14f0" stroke-width="2"/>
<text x="684" y="98.3">LP 4</text>
<rect x="718.5" y="88" width="40" height="12" fill="#000" fill-opacity="0.1" stroke="#1400f587" stroke-width="2" stroke-dasharray="10 5"/>
<text x="765.7" y="98.3" textLength="49.8" lengthAdjust="spacingAndGlyphs">EV SoC 1</text>
<rect x="825.5" y="88" width="40" height="12" fill="#000" fill-opacity="0.1" stroke="#1400f587" stroke-width="2" stroke-dasharray="10 5"/>
<text x="872.7" y="98.3" textLength="49.8" lengthAdjust="spacingAndGlyphs">EV SoC 2</text>
<rect x="933.5" y="88" width="40" height="12" fill="#c8ff0d" fill-opacity="0.3" stroke="#fc9930bf" stroke-width="1.5"/>
<text x="979.5" y="98.3">Speicher ges.</text>
<rect x="1063" y="88" width="40" height="12" fill="#c8ff0d" fill-opacity="0.3" stroke="#fc9930bf" stroke-width="2.2" stroke-dasharray="10 5"/>
<text x="1109" y="98.3">Speicher ges. SoC</text>
</svg>
<!--CE-->

<!-- table -->
<div class="abs" style="left:8px;top:441.5px;width:1341px;height:55.5px;background:#b8bcc9;border-radius:4px 4px 0 0"></div>
<div class="abs" style="left:8px;top:497px;width:1341px;height:58px;background:#d3d8e6;border:1px solid #2f3338"></div>
<div class="abs" style="left:8px;top:554px;width:1341px;height:110px;background:#fff;border:1px solid #2f3338"></div>
<div class="abs" style="left:9px;top:555px;width:1338px;height:54.5px;background:#d3d8e6;border-bottom:1px solid #c4c8d2"></div>
<div class="abs" style="left:14px;top:617px;width:1329px;height:60px;background:#d2ecf1;border:1px solid #c0e3ea;border-radius:4px"></div>

<span class="tx th" style="left:19px;top:447.5px">Ladepunkt</span>
<span class="tx th" style="left:351px;top:447.5px">Lademodus</span>
<span class="tx th" style="left:351px;top:471.5px">Fahrzeug</span>
<span class="tx th" style="left:684px;top:447.5px">Parameter</span>
<span class="tx th" style="left:684px;top:471.5px">SoC</span>
<span class="tx th" style="left:1016px;top:447.5px">geladen</span>

<span class="tx th" style="left:19px;top:506px">Außen</span>
<svg style="left:73.5px;top:510px" width="9.400" height="12.500" fill="#15651f"><use href="#i-plug"/></svg>
<span class="tx td" style="left:351px;top:506px">PV</span>
<span class="tx td" style="left:351px;top:530px">BMW i4 M50</span>
<span class="tx td" style="left:684px;top:506px;letter-spacing:-.57px">2,17 kW</span>
<svg style="left:745px;top:509px" width="13" height="13" viewBox="0 0 13 13"><circle cx="6.500" cy="6.500" r="5.600" fill="none" stroke="#505050" stroke-width="1.100"/><text x="6.500" y="9.600" text-anchor="middle" font-family="Liberation Sans, Arial, sans-serif" font-size="8.500" fill="#505050">1</text></svg>
<span class="tx td" style="left:763.7px;top:506px;letter-spacing:-.47px">10 A</span>
<span class="tx td" style="left:684px;top:530px;letter-spacing:.15px">84 %</span>
<svg style="left:726.5px;top:534.3px" width="12" height="12" fill="#505050"><use href="#i-redo"/></svg>
<span class="tx td" style="left:1016px;top:506px">18,5 kWh / 80,2 km</span>
<svg style="left:1324px;top:507px" width="14" height="16" fill="#444"><use href="#i-plus"/></svg>

<span class="tx th" style="left:19px;top:560.5px">Innen</span>
<svg style="left:66.3px;top:565px" width="9.400" height="12.500" fill="#15651f"><use href="#i-plug"/></svg>
<span class="tx td" style="left:351px;top:560.5px">PV</span>
<span class="tx td" style="left:351px;top:584.5px">Opel Mokka-e</span>
<span class="tx td" style="left:684px;top:560.5px;letter-spacing:-.1px">6,56 kW</span>
<svg style="left:748.3px;top:563.5px" width="13" height="13" viewBox="0 0 13 13"><circle cx="6.500" cy="6.500" r="5.600" fill="none" stroke="#505050" stroke-width="1.100"/><text x="6.500" y="9.600" text-anchor="middle" font-family="Liberation Sans, Arial, sans-serif" font-size="8.500" fill="#505050">3</text></svg>
<span class="tx td" style="left:767px;top:560.5px;letter-spacing:-.47px">10 A</span>
<span class="tx td" style="left:684px;top:584.5px;letter-spacing:.15px">68 %</span>
<svg style="left:726.5px;top:589px" width="12" height="12" fill="#505050"><use href="#i-redo"/></svg>
<span class="tx td" style="left:1016px;top:560.5px">0,6 kWh / 2,6 km</span>
<svg style="left:1324px;top:562px" width="14" height="16" fill="#444"><use href="#i-minus"/></svg>

<svg style="left:39.800px;top:633.800px" width="15.500" height="15.500" fill="#0e5460"><use href="#i-info"/></svg>
<span class="tx" style="left:60px;top:632.5px;color:#0e5460;letter-spacing:.07px">Umschaltverzögerung von 1 auf 3 Phasen für 7.0 Min aktiv.</span>
</div></body></html>
